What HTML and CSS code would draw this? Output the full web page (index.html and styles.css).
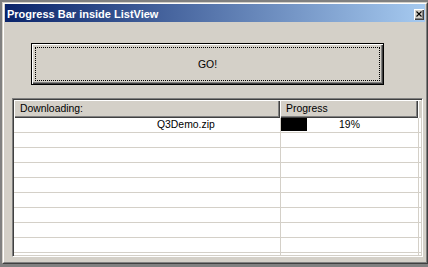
FILE: index.html
```html
<!DOCTYPE html>
<html lang="en">
<head>
  <meta charset="UTF-8" />
  <title>Progress Bar inside ListView</title>
  <link rel="stylesheet" href="styles.css">
</head>
<body>
  <div class="window">
    <div class="window-inner">
      <div class="titlebar">
        <span class="title">Progress Bar inside ListView</span>
        <span class="close-btn">
          <svg width="6" height="6" viewBox="0 0 6 6"><path d="M0.5 0.5L5.5 5.5M5.5 0.5L0.5 5.5" stroke="#000" stroke-width="1.1" fill="none"/></svg>
        </span>
      </div>

      <div class="client">
        <button class="go-btn">GO!</button>

        <div class="listview">
          <div class="lv-header">
            <div class="lv-col col-name">Downloading:</div>
            <div class="lv-col col-progress">Progress</div>
            <div class="lv-col col-fill"></div>
          </div>
          <div class="lv-body">
            <div class="lv-row">
              <div class="lv-cell col-name file">Q3Demo.zip</div>
              <div class="lv-cell col-progress progress">
                <div class="bar" style="width: 19%"></div>
                <span class="pct">19%</span>
              </div>
            </div>
            <div class="lv-row"><div class="lv-cell col-name"></div><div class="lv-cell col-progress"></div></div>
            <div class="lv-row"><div class="lv-cell col-name"></div><div class="lv-cell col-progress"></div></div>
            <div class="lv-row"><div class="lv-cell col-name"></div><div class="lv-cell col-progress"></div></div>
            <div class="lv-row"><div class="lv-cell col-name"></div><div class="lv-cell col-progress"></div></div>
            <div class="lv-row"><div class="lv-cell col-name"></div><div class="lv-cell col-progress"></div></div>
            <div class="lv-row"><div class="lv-cell col-name"></div><div class="lv-cell col-progress"></div></div>
            <div class="lv-row"><div class="lv-cell col-name"></div><div class="lv-cell col-progress"></div></div>
            <div class="lv-row"><div class="lv-cell col-name"></div><div class="lv-cell col-progress"></div></div>
            <div class="lv-row"><div class="lv-cell col-name"></div><div class="lv-cell col-progress"></div></div>
          </div>
        </div>
      </div>
    </div>
  </div>
</body>
</html>
```

FILE: styles.css
```css
:root {
  --face: #d4d0c8;
  --shadow: #808080;
  --dark: #404040;
  --grid: #d4d0c8;
}
* {
  box-sizing: border-box;
  margin: 0;
  padding: 0;
}
body {
  background: var(--shadow);
  font-family: 'Liberation Sans', Arial, sans-serif;
  font-size: 10.4px;
  color: #000;
  overflow: hidden;
}
.window {
  margin: 2px 0 0 2px;
  width: 426px;
  height: 262px;
  border: 1px solid;
  border-color: var(--face) var(--dark) var(--dark) var(--face);
}
.window-inner {
  height: 100%;
  border: 1px solid;
  border-color: #fff var(--shadow) var(--shadow) #fff;
  background: var(--face);
  padding: 0 1px 1px 1px;
}
.titlebar {
  height: 18px;
  display: flex;
  justify-content: space-between;
  background: linear-gradient(to right, #0a246a, #a6caf0);
  padding: 0 1px 0 2px;
}
.title {
  color: #fff;
  font-weight: bold;
  font-size: 11px;
  line-height: 16px;
  padding-top: 2px;
}
.close-btn {
  width: 10px;
  height: 11px;
  margin-top: 5px;
  background: var(--face);
  box-shadow: inset 1px 1px #fff, inset -1px -1px var(--dark), inset -2px -2px var(--shadow);
  display: flex;
  align-items: center;
  justify-content: center;
  padding: 0 1px 1px 0;
}
.close-btn svg {
  display: block;
}
.client {
  display: flex;
  flex-direction: column;
  align-items: flex-start;
}
.go-btn {
  position: relative;
  margin: 21px 0 0 26px;
  width: 353px;
  height: 42px;
  border: 1px solid #000;
  background: var(--face);
  box-shadow: inset 1px 1px #fff, inset -1px -1px var(--dark), inset -2px -2px var(--shadow);
  font-family: 'Liberation Sans', Arial, sans-serif;
  font-size: 10.4px;
  color: #000;
}
/* focus rectangle */
.go-btn::after {
  content: '';
  position: absolute;
  top: 3px;
  left: 3px;
  right: 3px;
  bottom: 3px;
  border: 1px dotted #000;
}
.listview {
  margin: 13px 0 0 7px;
  width: 411px;
  height: 159px;
  padding: 1px;
  border: 1px solid;
  border-color: var(--shadow) #fff #fff var(--shadow);
  background: #fff;
  box-shadow: inset 1px 1px var(--dark), inset -1px -1px var(--face);
  overflow: hidden;
}
.lv-header {
  display: flex;
  height: 18px;
}
.lv-col {
  background: var(--face);
  box-shadow: inset 1px 1px #fff, inset -1px -1px var(--dark), inset -2px -2px var(--shadow);
  padding-left: 6px;
  line-height: 17px;
  white-space: nowrap;
}
.lv-header .col-name {
  width: 266px;
}
.lv-header .col-progress {
  width: 138px;
}
.lv-header .col-fill {
  flex: 1;
  padding: 0;
  box-shadow: inset 1px 1px #fff;
}
.lv-row {
  display: flex;
  height: 15px;
  border-bottom: 1px solid var(--grid);
}
.lv-cell {
  border-right: 1px solid var(--grid);
  line-height: 14px;
  white-space: nowrap;
}
.lv-row .col-name {
  width: 267px;
}
.lv-row .col-progress {
  width: 138px;
}
.file {
  padding-left: 143px;
}
.progress {
  display: grid;
}
.bar,
.pct {
  grid-area: 1 / 1;
}
.bar {
  height: 13px;
  background: #000;
}
.pct {
  text-align: center;
}
```
